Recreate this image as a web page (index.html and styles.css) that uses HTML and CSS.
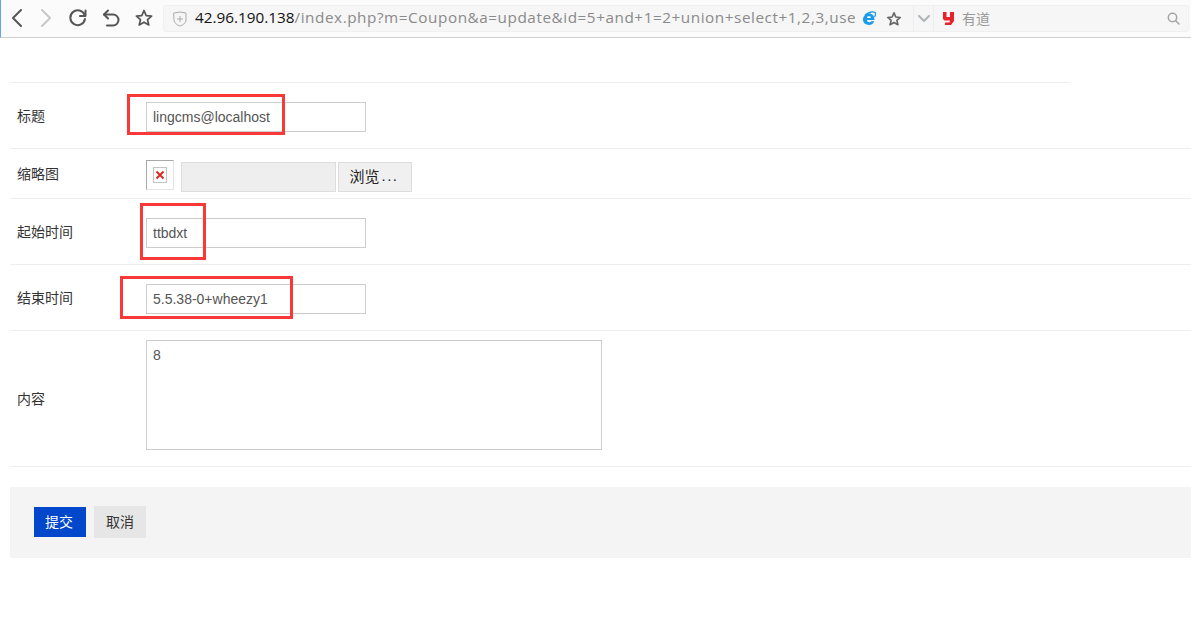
FILE: index.html
```html
<!DOCTYPE html>
<html lang="zh">
<head>
<meta charset="utf-8">
<title>Coupon</title>
<link rel="stylesheet" href="styles.css">
</head>
<body>
<header class="toolbar">
  <svg class="tool" width="22" height="22" viewBox="0 0 22 22"><path d="M15 3 L7 11 L15 19" class="ic dark"/></svg>
  <svg class="tool t-fwd" width="22" height="22" viewBox="0 0 22 22"><path d="M7 3 L15 11 L7 19" class="ic light"/></svg>
  <svg class="tool t-reload" width="22" height="22" viewBox="0 0 22 22"><path d="M17.6 8 A7.4 7.4 0 1 0 18 12" class="ic dark"/><path d="M18.5 3.5 V9 H13" class="ic dark"/></svg>
  <svg class="tool t-undo" width="22" height="22" viewBox="0 0 22 22"><path d="M8 3.5 L4 7.5 L8 11.5" class="ic dark"/><path d="M4 7.5 H13 A5.5 5.5 0 0 1 13 18.5 H7" class="ic dark"/></svg>
  <svg class="tool t-star" width="22" height="22" viewBox="0 0 22 22"><path d="M11 3.5 L13.2 8.6 L18.6 9.1 L14.5 12.7 L15.8 18 L11 15.2 L6.2 18 L7.500 12.7 L3.4 9.1 L8.8 8.6 Z" class="ic dark thin"/></svg>
  <div class="addressbar">
    <div class="url-wrap">
      <svg class="shield" width="14" height="16" viewBox="0 0 14 16"><path d="M1 2 L7 1 L13 2 V9 C13 12 10 14 7 15 C4 14 1 12 1 9 Z" class="ic shield-line"/><path d="M7 5.5 V10.5 M4.5 8 H9.5" class="ic shield-line"/></svg>
      <span class="url"><span class="host">42.96.190.138</span><span class="path">/index.php?m=Coupon&amp;a=update&amp;id=5+and+1=2+union+select+1,2,3,use</span></span>
      <svg class="ie" width="14" height="15" viewBox="0 0 14 15"><path d="M1 8.800 C1 5 3.800 2.500 7 2.500 C10.500 2.500 12.500 5 12.500 9 H5 C5 10.500 6 11.200 7.200 11.200 C8.200 11.200 8.800 10.800 9.200 10.200 H12.300 C11.500 12.500 9.500 14 7 14 C3.500 14 1 11.800 1 8.800 Z M5 7 H9 C8.900 5.800 8.200 5 7 5 C5.800 5 5.100 5.800 5 7 Z" class="ie-fill"/><path d="M3 4 C6 1.500 11 0 13 1.500 C14 2.500 13.500 4.500 12.500 6" class="ie-ring"/></svg>
      <svg class="addr-star" width="18" height="18" viewBox="0 0 22 22"><path d="M11 3.500 L13.200 8.600 L18.600 9.100 L14.500 12.700 L15.800 18 L11 15.200 L6.200 18 L7.500 12.700 L3.400 9.100 L8.800 8.600 Z" class="ic grey"/></svg>
    </div>
    <div class="drop"><svg width="14" height="8" viewBox="0 0 14 8"><path d="M2 1 L7 6 L12 1" class="ic drop-line"/></svg></div>
    <div class="search">
      <svg class="youdao" width="11" height="13" viewBox="0 0 11 13"><path d="M0 0 H3.500 V5 H7 V0 H11 V9 L8 13 H2 V10.500 H6.500 L7 8.500 H1.500 L0 7 Z" class="youdao-fill"/></svg>
      <span class="search-text">有道</span>
      <svg class="lens" width="13" height="13" viewBox="0 0 13 13"><circle cx="5.500" cy="5.500" r="4.200" class="ic lens-line"/><path d="M9 9 L12 12" class="ic lens-line"/></svg>
    </div>
  </div>
</header>

<form class="form">
  <div class="row row-first">
    <label class="label">标题</label>
    <input class="field" type="text" value="lingcms@localhost">
    <span class="mark mark-1"></span>
  </div>
  <div class="row row-thumb">
    <label class="label">缩略图</label>
    <span class="thumb"><svg width="14" height="16" viewBox="0 0 14 16"><rect x="0.500" y="0.500" width="13" height="15" class="thumb-box"/><path d="M3.500 4.500 L10.500 11.500 M10.500 4.500 L3.500 11.500" class="thumb-x"/></svg></span>
    <span class="file-path"></span>
    <span class="file-btn">浏览<span class="dots">...</span></span>
  </div>
  <div class="row row-field">
    <label class="label">起始时间</label>
    <input class="field" type="text" value="ttbdxt">
    <span class="mark mark-2"></span>
  </div>
  <div class="row row-field">
    <label class="label">结束时间</label>
    <input class="field" type="text" value="5.5.38-0+wheezy1">
    <span class="mark mark-3"></span>
  </div>
  <div class="row row-area">
    <label class="label">内容</label>
    <textarea class="area">8</textarea>
  </div>
  <div class="actions">
    <button class="btn btn-primary" type="button">提交</button>
    <button class="btn btn-cancel" type="button">取消</button>
  </div>
</form>
</body>
</html>
```

FILE: styles.css
```css
* { box-sizing: border-box; }
html, body { margin: 0; padding: 0; }
body {
  width: 1191px;
  height: 636px;
  overflow: hidden;
  background: #fff;
  font-family: "Liberation Sans", "Noto Sans CJK SC", sans-serif;
  font-size: 14px;
  color: #333;
}

.toolbar {
  height: 38px;
  display: flex;
  align-items: flex-start;
  background: #fbfbfb;
  border-bottom: 1px solid #cfcfcf;
  border-left: 1px solid #5ea6f2;
  padding: 5px 2px 0 5px;
}
.tool { flex: none; margin-top: 2px; }
.t-fwd { margin-left: 7px; }
.t-reload { margin-left: 10px; }
.t-undo { margin-left: 11px; }
.t-star { margin-left: 11px; }
.ic { fill: none; stroke-linecap: round; stroke-linejoin: round; }
.dark { stroke: #555; stroke-width: 2; }
.dark.thin { stroke-width: 1.700; }
.light { stroke: #c8c8c8; stroke-width: 2; }
.grey { stroke: #666; stroke-width: 2; }

.addressbar {
  margin-left: 8px;
  width: 1027px;
  height: 27px;
  display: flex;
  background: #f6f6f6;
  border: 1px solid #f0f0f0;
  border-radius: 3px;
}
.url-wrap {
  width: 749px;
  display: flex;
  align-items: center;
  flex: none;
  padding-left: 9px;
}
.shield { flex: none; }
.shield-line { stroke: #aaa; stroke-width: 1; }
.url {
  margin-left: 8px;
  width: 660px;
  flex: none;
  padding-bottom: 3px;
  white-space: nowrap;
  overflow: hidden;
  font-family: "Open Sans", "Liberation Sans", sans-serif;
  font-size: 15.300px;
}
.host { color: #111; }
.path { color: #8a8a8a; letter-spacing: 0.550px; }
.ie { flex: none; margin-left: 7px; }
.ie-fill { fill: #1a9be8; fill-rule: evenodd; }
.ie-ring { fill: none; stroke: #1a9be8; stroke-width: 1.300; }
.addr-star { flex: none; margin-left: 9px; }
.drop {
  width: 21px;
  flex: none;
  border-left: 1px solid #ededed;
  border-right: 1px solid #ededed;
  display: flex;
  align-items: center;
  justify-content: center;
}
.drop-line { stroke: #b0b5b8; stroke-width: 2; }
.search {
  flex: 1;
  display: flex;
  align-items: center;
  padding: 0 8px 0 9px;
}
.youdao { flex: none; }
.youdao-fill { fill: #e8212b; }
.search-text { margin-left: 8px; padding-bottom: 2px; font-size: 14px; color: #999; }
.lens { margin-left: auto; }
.lens-line { stroke: #a5a5a5; stroke-width: 1.500; }

.form { margin: 45px 0 0 10px; }
.row {
  position: relative;
  display: flex;
  align-items: center;
  border-bottom: 1px solid #eee;
}
.row-first {
  height: 66px;
  padding-bottom: 1px;
}
.row-first::before {
  content: "";
  position: absolute;
  left: 0;
  top: -1px;
  width: 1060px;
  height: 1px;
  background: #eee;
}
.row-thumb { height: 50px; }
.row-field { height: 66px; padding-bottom: 1px; }
.row-area { height: 136px; align-items: flex-start; }
.label {
  width: 136px;
  flex: none;
  padding-left: 7px;
  font-size: 14px;
  color: #333;
}
.row-thumb .label { padding-bottom: 2px; }
.field {
  width: 220px;
  height: 30px;
  flex: none;
  margin-top: 4px;
  border: 1px solid #ccc;
  background: #fff;
  padding: 0 6px;
  font-family: "Liberation Sans", sans-serif;
  font-size: 14px;
  color: #555;
  outline: none;
}

.thumb {
  width: 28px;
  height: 30px;
  flex: none;
  display: flex;
  align-items: center;
  justify-content: center;
  border: 1px solid #e4e4e4;
  border-top-color: #a8a8a8;
  border-left-color: #a8a8a8;
  margin-top: 3px;
}
.thumb-box { fill: #fff; stroke: #c4c4c4; }
.thumb-x { stroke: #d92c1e; stroke-width: 2; fill: none; }
.file-path {
  width: 155px;
  height: 30px;
  flex: none;
  margin: 11px 0 4px 7px;
  background: #eee;
  border: 1px solid #ddd;
}
.file-btn {
  width: 74px;
  height: 30px;
  flex: none;
  margin: 11px 0 4px 2px;
  padding: 0 2px 3px 0;
  background: #f0f0f0;
  border: 1px solid #ddd;
  display: flex;
  align-items: center;
  justify-content: center;
  font-size: 15px;
  color: #222;
}
.dots { letter-spacing: 1.500px; margin-left: 2px; }

.row-area .label { align-self: center; padding-bottom: 2px; }
.area {
  width: 456px;
  height: 110px;
  flex: none;
  margin-top: 9px;
  border: 1px solid #ccc;
  padding: 6px;
  font-family: "Liberation Sans", sans-serif;
  font-size: 14px;
  color: #555;
  resize: none;
  outline: none;
}

.mark {
  position: absolute;
  border: 3px solid #fb3838;
  pointer-events: none;
}
.mark-1 { left: 117px; top: 11px; width: 158px; height: 41px; }
.mark-2 { left: 130px; top: 4px; width: 66px; height: 57px; }
.mark-3 { left: 110px; top: 11px; width: 173px; height: 43px; }

.actions {
  margin-top: 20px;
  height: 71px;
  background: #f4f4f4;
  display: flex;
  align-items: center;
  padding: 0 0 2px 24px;
  gap: 8px;
}
.btn {
  width: 52px;
  border: 0;
  padding: 0 2px 2px 0;
  font-family: "Liberation Sans", "Noto Sans CJK SC", sans-serif;
  font-size: 14px;
}
.btn-primary { height: 30px; background: #0047cc; color: #fff; }
.btn-cancel { height: 32px; padding-right: 0; background: #e6e6e6; color: #333; }
```
